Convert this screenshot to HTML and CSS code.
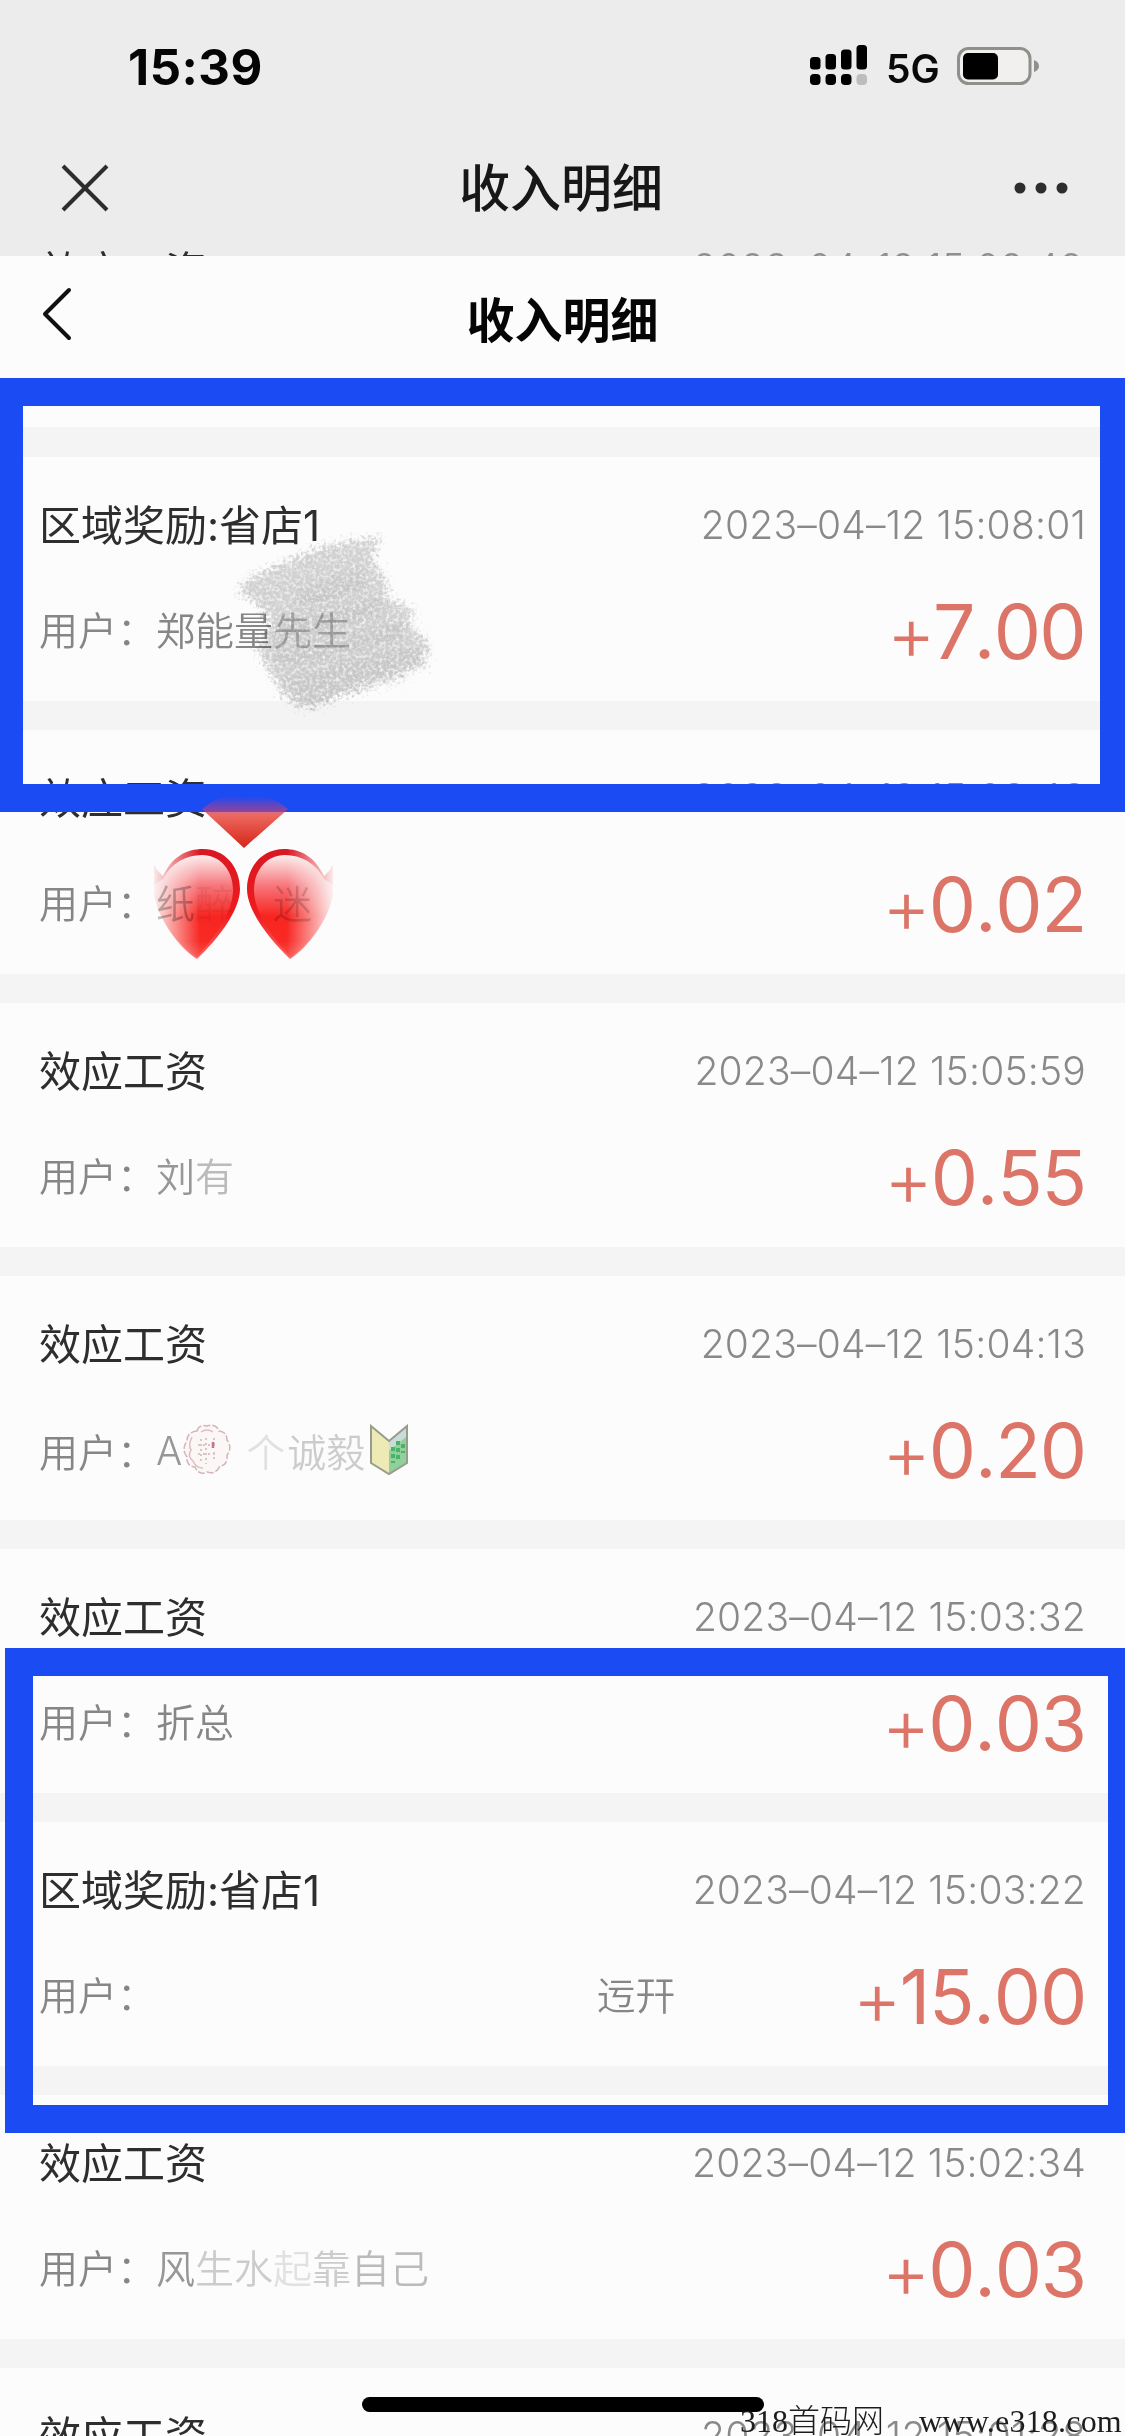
FILE: index.html
```html
<!DOCTYPE html>
<html lang="zh-CN">
<head>
<meta charset="utf-8">
<title>收入明细</title>
<link rel="stylesheet" href="styles.css">
</head>
<body>
<div class="screen">
  <header class="top">
    <div class="status">
      <span class="time">15:39</span>
      <div class="status-right">
        <svg class="signal" width="60" height="44" viewBox="0 0 60 44">
          <rect x="1" y="16" width="10.500" height="12.500" rx="3.500"/><rect x="16.500" y="13" width="10.500" height="15.500" rx="3.500"/><rect x="32" y="8.500" width="10.500" height="20" rx="3.500"/><rect x="47.500" y="4" width="10.500" height="24.500" rx="3.500"/>
          <rect x="1" y="33" width="10.500" height="11" rx="4"/><rect x="16.500" y="33" width="10.500" height="11" rx="4"/><rect x="32" y="33" width="10.500" height="11" rx="4"/><rect x="47.500" y="33" width="10.500" height="11" rx="4" fill="#bdbdbd"/>
        </svg>
        <span class="net">5G</span>
        <svg class="battery" width="84" height="40" viewBox="0 0 84 40">
          <rect x="1.500" y="1.500" width="71.500" height="35" rx="10" fill="#f1f0ee" stroke="#8f8f8b" stroke-width="3"/>
          <rect x="6" y="6" width="35" height="26.500" rx="5"/>
          <path d="M77 13Q82 15 82 19T77 25Z" fill="#8f8f8b"/>
        </svg>
      </div>
    </div>
    <div class="navbar">
      <svg width="48" height="48" viewBox="0 0 48 48"><path d="M2 2L46 46M46 2L2 46" stroke="#2d2d2d" stroke-width="4"/></svg>
      <h1>收入明细</h1>
      <svg width="56" height="14" viewBox="0 0 56 14" fill="#2d2d2d"><circle cx="7" cy="7" r="5.500"/><circle cx="28" cy="7" r="5.500"/><circle cx="49" cy="7" r="5.500"/></svg>
    </div>
    <div class="peek"><span>效应工资</span><span class="peek-date">2023–04–12 15:08:48</span></div>
  </header>
  <div class="subnav">
    <svg width="34" height="56" viewBox="0 0 34 56" fill="none" stroke="#111" stroke-width="4" stroke-linecap="round" stroke-linejoin="round"><path d="M30 4L6 28L30 52"/></svg>
    <h2>收入明细</h2>
  </div>
  <main class="list">
    <article class="card">
      <div class="line"><h3>区域奖励:省店1</h3><time>2023–04–12 15:08:01</time></div>
      <div class="line low"><p>用户：郑能量<span class="f2">先生</span></p><b class="a7"><i>+</i>7.00</b></div>
    </article>
    <article class="card">
      <div class="line"><h3>效应工资</h3><time>2023–04–12 15:08:43</time></div>
      <div class="line low"><p>用户：<span class="f2">纸</span><span class="f5">醉</span><span class="last">迷</span></p><b><i>+</i>0.02</b></div>
    </article>
    <article class="card">
      <div class="line"><h3>效应工资</h3><time>2023–04–12 15:05:59</time></div>
      <div class="line low"><p>用户：<span class="f1">刘</span><span class="f2">有</span></p><b><i>+</i>0.55</b></div>
    </article>
    <article class="card">
      <div class="line"><h3>效应工资</h3><time>2023–04–12 15:04:13</time></div>
      <div class="line low"><p class="emblems">用户：<span class="f1">A</span><svg class="rosette" width="50" height="54" viewBox="0 0 50 54"><path d="M15 8Q17 1 25 3Q34 0 37 8Q45 9 45 17Q51 25 45 32Q46 42 38 43Q34 52 25 49Q17 53 13 44Q4 43 5 34Q-1 26 5 18Q5 9 15 8Z" fill="#fbf7f7" stroke="#d6b4b8" stroke-width="1.500" stroke-dasharray="7 2"/><path d="M10 14Q6 22 9 27Q5 33 11 38Q14 45 21 45M19 9Q25 5 31 9" fill="none" stroke="#dcbfc2" stroke-width="1.500"/><path d="M19 16v24M24 15v26M32 15v10M32 29v8M16 22h18M16 31h18" stroke="#dcc3c5" stroke-width="2" stroke-dasharray="2 3" fill="none"/><path d="M31 19v6" stroke="#c9718a" stroke-width="2.500"/></svg><span class="f4 ge">个</span><span class="f3">诚毅</span><svg class="leaf" width="42" height="52" viewBox="0 0 42 52"><path d="M3 2L21 17V50L3 39Z" fill="#eeeab5"/><path d="M39 2L21 17V50L39 39Z" fill="#8fd09b"/><path d="M39 3L21 18V27L39 12Z" fill="#c8dcdc"/><path d="M30 17v18M25 23v16M35 20v9" stroke="#4eb16a" stroke-width="4" stroke-dasharray="4 3"/><path d="M3 2L21 17L39 2V39L21 50L3 39Z" fill="none" stroke="#999c8c" stroke-width="2"/></svg></p><b><i>+</i>0.20</b></div>
    </article>
    <article class="card">
      <div class="line"><h3>效应工资</h3><time>2023–04–12 15:03:32</time></div>
      <div class="line low"><p>用户：折总</p><b><i>+</i>0.03</b></div>
    </article>
    <article class="card">
      <div class="line"><h3>区域奖励:省店1</h3><time>2023–04–12 15:03:22</time></div>
      <div class="line low"><p>用户：</p><p class="stray">迃幵</p><b><i>+</i>15.00</b></div>
    </article>
    <article class="card">
      <div class="line"><h3>效应工资</h3><time>2023–04–12 15:02:34</time></div>
      <div class="line low"><p>用户：<span class="f1">风</span><span class="f3">生水</span><span class="f4">起</span><span class="f3">靠</span><span class="f2">自己</span></p><b><i>+</i>0.03</b></div>
    </article>
    <article class="card">
      <div class="line"><h3>效应工资</h3><time>2023–04–12 15:01:28</time></div>
    </article>
  </main>

  <svg class="scribble" width="210" height="190" viewBox="0 0 210 190">
    <defs><filter id="chalk" x="-10%" y="-10%" width="120%" height="120%"><feTurbulence type="fractalNoise" baseFrequency=".3" numOctaves="3" seed="4" result="n"/><feGaussianBlur in="SourceGraphic" stdDeviation="2.500" result="s"/><feDisplacementMap in="s" in2="n" scale="26" xChannelSelector="R" yChannelSelector="B" result="d"/><feColorMatrix in="n" type="matrix" values="0 0 0 0 0  0 0 0 0 0  0 0 0 0 0  0 -2 0 0 1.850" result="m"/><feComposite in="d" in2="m" operator="in" result="c"/><feGaussianBlur in="c" stdDeviation=".7"/></filter></defs>
    <g filter="url(#chalk)">
      <path d="M15 46L90 14L148 5L138 28L156 52L152 65L181 78L176 92L197 112L190 135L140 150L78 176L50 164L24 118L38 92L22 68L4 62Z" fill="#c4c4c4" fill-opacity=".75"/>
      <path d="M65 70L130 46M38 105L150 72M42 130L171 98M55 153L186 122M60 168L170 138" stroke="#bcbcbc" stroke-width="18" stroke-opacity=".4"/>
    </g>
  </svg>
  <div class="frame frame-a"></div>
  <div class="frame frame-b"></div>
  <svg class="hearts" width="200" height="60" viewBox="0 0 200 60">
    <defs>
      <linearGradient id="tip" x1="0" y1="0" x2="0" y2="1"><stop offset="0" stop-color="#b53f88" stop-opacity="0"/><stop offset=".32" stop-color="#c8406c" stop-opacity=".75"/><stop offset=".36" stop-color="#ec6a60"/><stop offset="1" stop-color="#d82418"/></linearGradient>
    </defs>
    <path d="M52 14Q73 -5 94 3Q116 -5 138 14L94 53Z" fill="url(#tip)"/>
  </svg>
  <svg class="hearts pair" width="200" height="176" viewBox="0 0 200 176">
    <defs>
      <linearGradient id="gloss" x1="0" y1="0" x2="0" y2="1"><stop offset="0" stop-color="#fff1f1"/><stop offset=".3" stop-color="#fa777d"/><stop offset=".6" stop-color="#fb2520"/><stop offset=".85" stop-color="#fb2a25"/><stop offset="1" stop-color="#f9534c"/></linearGradient>
      <linearGradient id="rim" x1="0" y1="0" x2="0" y2="1"><stop offset="0" stop-color="#dc1722"/><stop offset=".6" stop-color="#f21c1e"/><stop offset="1" stop-color="#f66"/></linearGradient>
      <linearGradient id="edge"><stop offset="0" stop-color="#fff" stop-opacity="0"/><stop offset=".5" stop-color="#fff"/><stop offset="1" stop-color="#fff"/></linearGradient>
      <mask id="fade"><rect width="100" height="176" fill="url(#edge)"/></mask>
      <g id="half" mask="url(#fade)">
        <path d="M4 70Q7 76 13 81C22 62 36 54 53 54C75 54 90 72 90 94C90 116 67 145 47 164C29 153 8 124 4 99Z" fill="url(#rim)"/>
        <path d="M4 90L13 84C21 68 36 60 52 60C70 60 83 75 83 95C83 118 64 143 47 162C30 152 8 124 4 99Z" fill="url(#gloss)"/>
      </g>
    </defs>
    <use href="#half"/>
    <use href="#half" transform="translate(187 0) scale(-1 1)"/>
  </svg>
  <div class="home-bar"></div>
  <div class="watermark"><span class="wm-cn">318首码网</span><span class="wm-url">www.e318.com</span></div>
</div>
</body>
</html>
```
FILE: styles.css
```css
* { box-sizing: border-box; margin: 0; padding: 0; }
body { width: 1125px; height: 2436px; overflow: hidden; }
.screen {
  position: relative; width: 1125px; height: 2436px; overflow: hidden;
  background: #f4f4f4; color: #2e2e2e;
  font-family: Inter, "Noto Sans CJK SC", sans-serif;
}
.top { display: flex; flex-direction: column; height: 256px; overflow: hidden; background: #ececec; }
.status { display: flex; flex: none; justify-content: space-between; height: 134px; padding: 38px 84px 0 128px; }
.time { font-size: 49px; line-height: 60px; font-weight: 700; letter-spacing: .5px; color: #050505; }
.status-right { display: flex; align-items: flex-start; }
.signal { margin: 3px 17px 0 0; }
.net { width: 71px; font-size: 39px; line-height: 61px; font-weight: 600; color: #0a0a0a; }
.battery { margin-top: 9px; }
.navbar { display: flex; flex: none; align-items: center; justify-content: space-between; height: 107px; padding: 0 56px 0 61px; }
.navbar h1 { font-size: 51px; line-height: 70px; padding-top: 3px; font-weight: 500; color: #171717; }
.peek { display: flex; flex: none; justify-content: space-between; padding: 1px 42px 0 39px; font-size: 42px; line-height: 60px; }
.peek-date { font-size: 39px; line-height: 52px; font-weight: 300; color: #8f8f8f; }
.subnav { display: grid; grid-template-columns: 34px 1fr 34px; align-items: center; height: 122px; padding: 0 39px; background: #fcfcfc; }
.subnav svg { margin-top: -6px; }
.subnav h2 { text-align: center; font-size: 48px; font-weight: 600; color: #050505; line-height: 70px; padding-top: 8px; }
.list { display: flex; flex-direction: column; gap: 29px; padding-top: 79px; background: linear-gradient(#fcfcfc 49px, #f4f4f4 49px); }
.card { display: flex; flex-direction: column; height: 244px; flex: none; padding: 33px 39px 0 39px; background: #fcfcfc; }
.line { display: flex; justify-content: space-between; align-items: center; height: 70px; white-space: nowrap; }
.low { height: 100px; margin-top: 21px; }
h3 { font-size: 42px; font-weight: 400; padding-bottom: 6px; }
time { font-size: 39px; font-weight: 300; letter-spacing: .2px; color: #898989; padding-bottom: 2px; }
.low p { font-size: 39px; font-weight: 350; color: #868686; padding-bottom: 6px; }
.low b { font-size: 75px; font-weight: 400; letter-spacing: -1.200px; font-kerning: none; color: #dc7568; }
.low i { position: relative; top: 1px; font-style: normal; font-weight: 300; margin-right: -1px; }
.low .a7 { letter-spacing: -1.700px; padding-right: 1px; }
.low .stray { margin-left: auto; margin-right: 178px; }
.f1 { opacity: .85; } .f2 { opacity: .55; } .f3 { opacity: .4; } .f4 { opacity: .22; } .f5 { opacity: .12; }
.last { margin-left: 39px; opacity: .35; }
.low .emblems { display: flex; align-items: center; padding-bottom: 0; }
.ge { margin: 0 2px 0 14px; }
.leaf { margin-left: 3px; }
.scribble { position: absolute; left: 233px; top: 532px; mix-blend-mode: multiply; }
.frame { position: absolute; border: 28px solid #1a4bf3; }
.frame-a { left: -5px; top: 378px; width: 1133px; height: 434px; }
.frame-b { left: 5px; top: 1648px; width: 1131px; height: 485px; }
.hearts { position: absolute; left: 150px; top: 795px; }
.pair { mix-blend-mode: multiply; }
.home-bar { position: absolute; left: 362px; top: 2397px; width: 402px; height: 15px; border-radius: 8px; background: #000; }
.watermark { position: absolute; left: 740px; top: 2402px; display: flex; gap: 35px; white-space: nowrap; font: 32px/38px "Liberation Serif", "Noto Sans CJK SC", serif; color: #1c1c1c; }
.wm-cn { font-weight: 300; }
.wm-url { letter-spacing: .2px; }
```
